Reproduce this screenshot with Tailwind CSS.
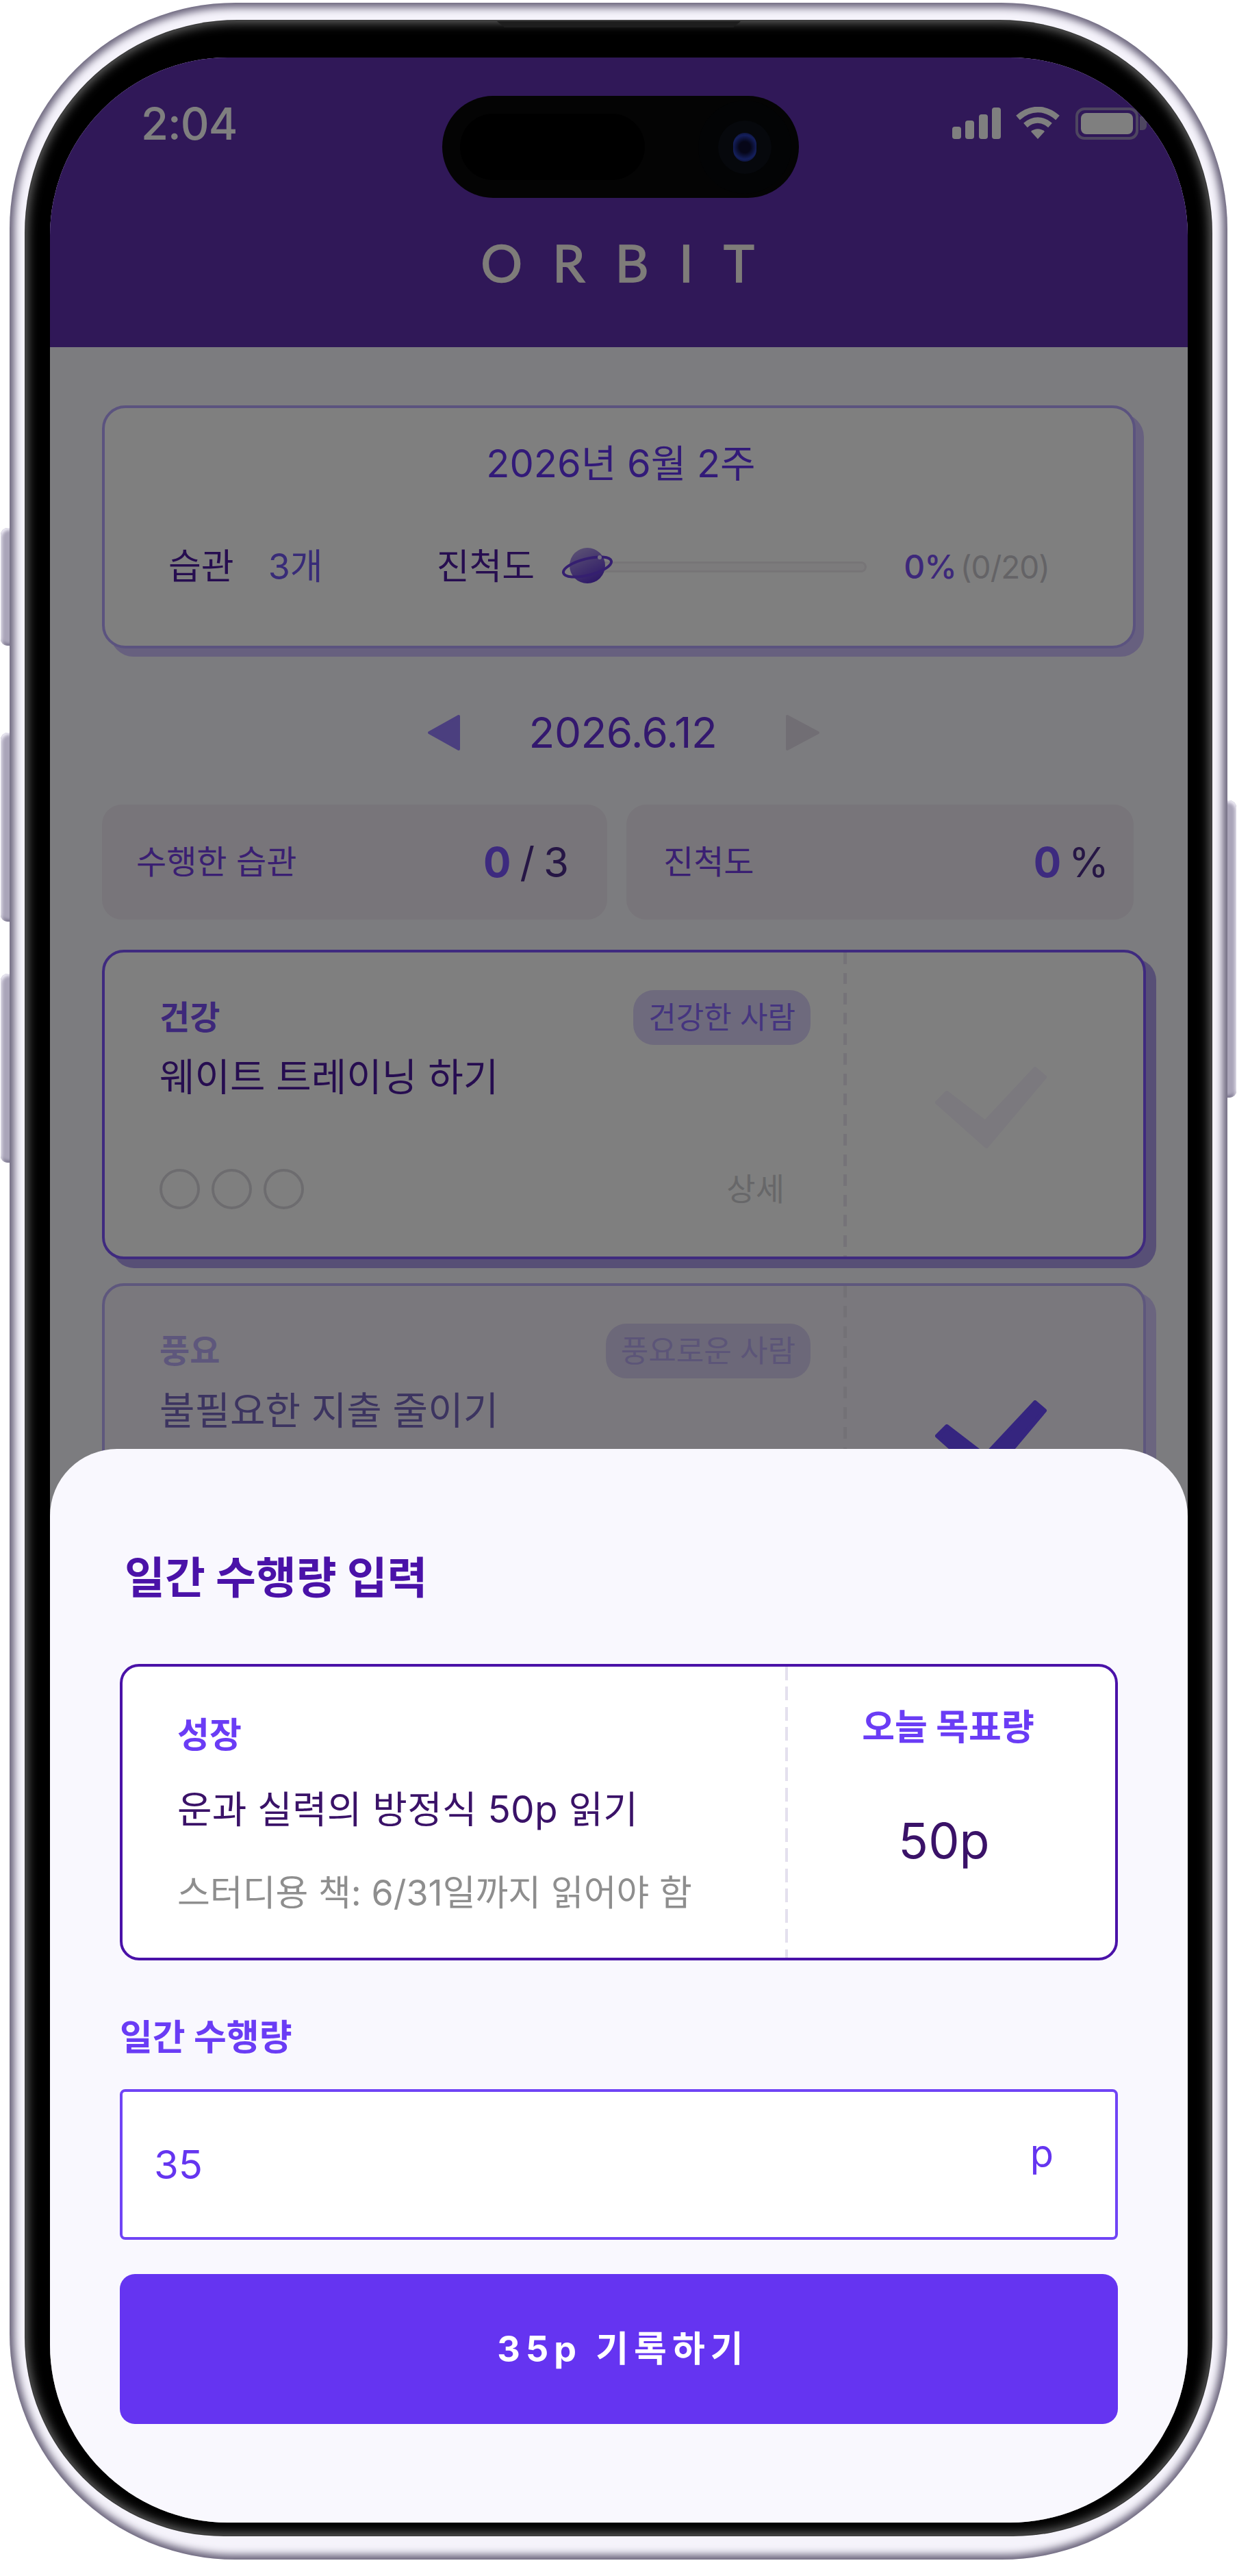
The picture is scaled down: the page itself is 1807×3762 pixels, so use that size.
<!DOCTYPE html>
<html lang="ko">
<head>
  <meta charset="UTF-8" />
  <meta name="viewport" content="width=device-width, initial-scale=1.0" />
  <title>Orbit</title>
  <script src="https://cdn.jsdelivr.net/npm/@tailwindcss/browser@4"></script>
</head>
<body class="bg-white font-['Inter','Noto_Sans_CJK_KR',sans-serif]">

  <div class="relative ml-[14px] pt-[4px] w-[1779px] h-[3762px]">
    <!-- side buttons -->
    <div class="absolute left-[-13px] top-[771px] w-[20px] h-[172px] rounded-l-[10px] bg-[#aaa5b9] shadow-[inset_2px_3px_4px_#efecf6,inset_0_-3px_4px_#77728a]"></div>
    <div class="absolute left-[-13px] top-[1070px] w-[20px] h-[276px] rounded-l-[10px] bg-[#aaa5b9] shadow-[inset_2px_3px_4px_#efecf6,inset_0_-3px_4px_#77728a]"></div>
    <div class="absolute left-[-13px] top-[1422px] w-[20px] h-[276px] rounded-l-[10px] bg-[#aaa5b9] shadow-[inset_2px_3px_4px_#efecf6,inset_0_-3px_4px_#77728a]"></div>
    <div class="absolute right-[-13px] top-[1169px] w-[20px] h-[434px] rounded-r-[10px] bg-[#aaa5b9] shadow-[inset_-2px_3px_4px_#efecf6,inset_0_-3px_4px_#77728a]"></div>

    <!-- metal band -->
    <div class="relative w-[1779px] h-[3734px] rounded-[330px] pt-[26px] px-[23px] pb-[35px] bg-[#f5f3fb] shadow-[inset_0_0_12px_7px_#676178]">
      <!-- bezel -->
      <div class="relative w-full h-full rounded-[310px_310px_290px_290px] bg-black pt-[54px] pl-[36px] pr-[35px] pb-[19px] shadow-[inset_0_0_16px_3px_#6b6b6b,0_0_0_1px_#3a3a3a]">
        <!-- speaker -->
        <div class="absolute left-[689px] top-[1px] w-[356px] h-[9px] bg-[#1e1e1e] [clip-path:polygon(0_0,100%_0,97%_100%,3%_100%)]"></div>

        <!-- screen -->
        <div class="relative w-[1662px] h-[3600px] rounded-[260px] overflow-hidden bg-[#f9f8fe]">

          <header class="h-[423px] bg-[#6030b0] text-[#fdf8f2]">
            <div class="flex justify-between items-start pt-[61px] pl-[133px] pr-[60px]">
              <span class="text-[65px] leading-[72px] font-medium tracking-[-1px] text-white">2:04</span>
              <div class="flex items-center mt-[11px]">
                <svg class="mr-[21px]" width="71" height="46" viewBox="0 0 71 46" fill="#fff">
                  <rect x="0" y="28" width="13" height="18" rx="4"/>
                  <rect x="19" y="19" width="13" height="27" rx="4"/>
                  <rect x="39" y="10" width="13" height="36" rx="4"/>
                  <rect x="58" y="0" width="13" height="46" rx="4"/>
                </svg>
                <svg class="mr-[22px]" width="66" height="48" viewBox="0 0 66 48" fill="none" stroke="#fff" stroke-width="8.5">
                  <path d="M4 16 C22 0 44 0 62 16"/>
                  <path d="M15 27 C26 17 40 17 51 27"/>
                  <path d="M33 47 L23 36 C29 31 37 31 43 36 Z" fill="#fff" stroke="none"/>
                </svg>
                <div class="w-[92px] h-[47px] rounded-[13px] border-[4px] border-[#9d8cc0] p-[4px]">
                  <div class="w-full h-full rounded-[8px] bg-white"></div>
                </div>
                <div class="w-[10px] h-[20px] ml-[2px] rounded-r-[6px] bg-[#9d8cc0]"></div>
              </div>
            </div>
            <div class="mt-[121px] text-center text-[76px] leading-[90px] font-['Lato',sans-serif] tracking-[44px] pl-[40px] [-webkit-text-stroke:1.5px_#fdf8f2]">ORBIT</div>
          </header>

          <main class="pt-[85px] pl-[76px]">
            <!-- weekly summary -->
            <section class="box-border w-[1510px] h-[355px] rounded-[34px] border-[4px] border-[#b6a6ff] bg-white shadow-[12px_12px_0_#cec0ff] pt-[51px]">
              <h2 class="text-center text-[56px] leading-[60px] pl-[6px] text-[#6534f1]">2026년 6월 2주</h2>
              <div class="flex items-center mt-[91px] pl-[93px] h-[60px] text-[52px]">
                <span class="text-[#4d1aa0]">습관</span>
                <span class="ml-[50px] text-[#7056f0]">3개</span>
                <span class="ml-[166px] text-[#4d1aa0]">진척도</span>
                <div class="relative ml-[85px] w-[400px] h-[16px] rounded-full border-[3px] border-[#eeeaee] bg-[#f8f6f8]">
                  <svg class="absolute left-[-49px] top-[-27px]" width="76" height="60" viewBox="0 0 76 60">
                    <defs>
                      <linearGradient id="planet" x1="0.2" y1="0" x2="0.7" y2="1">
                        <stop offset="0" stop-color="#b7a4e8"/>
                        <stop offset="1" stop-color="#5a2fd0"/>
                      </linearGradient>
                    </defs>
                    <circle cx="38" cy="30" r="26" fill="url(#planet)"/>
                    <ellipse cx="38" cy="32" rx="36" ry="12" fill="none" stroke="#6a3fe0" stroke-width="4" transform="rotate(-14 38 32)"/>
                    <circle cx="56" cy="18" r="3" fill="#e8e0ff"/>
                  </svg>
                </div>
                <span class="ml-[54px] text-[48px] font-medium tracking-[-1px] text-[#7a50f5]">0%</span>
                <span class="ml-[6px] text-[46px] tracking-[-1px] text-[#c9c7cc]">(0/20)</span>
              </div>
            </section>

            <!-- date nav -->
            <div class="flex items-center justify-center w-[1510px] h-[228px] pt-[18px] pl-[14px]">
              <svg width="49" height="54" viewBox="0 0 49 54" fill="#967eff" stroke="#967eff" stroke-width="4" stroke-linejoin="round"><path d="M3 27 L46 3 V51 Z"/></svg>
              <span class="mx-[100px] text-[62px] leading-[70px] tracking-[-0.5px] text-[#6630dc]">2026.6.12</span>
              <svg width="51" height="54" viewBox="0 0 51 54" fill="#e2dce8" stroke="#e2dce8" stroke-width="4" stroke-linejoin="round"><path d="M48 27 L3 3 V51 Z"/></svg>
            </div>

            <!-- daily stats -->
            <div class="flex gap-[28px] w-[1511px]">
              <div class="flex items-center justify-between w-[738px] h-[168px] rounded-[29px] bg-[#f0eaf4] pl-[50px] pr-[58px]">
                <span class="text-[48px] text-[#743ee4]">수행한 습관</span>
                <span class="text-[60px] tracking-[-2px] text-[#4c2c8a]"><b class="font-bold text-[#7a54ff]">0</b> / 3</span>
              </div>
              <div class="flex items-center justify-between w-[741px] h-[168px] rounded-[29px] bg-[#f0eaf4] pl-[54px] pr-[39px]">
                <span class="text-[48px] text-[#743ee4]">진척도</span>
                <span class="text-[60px] tracking-[-3px] text-[#4c2c8a]"><b class="font-bold text-[#7a54ff]">0</b> %</span>
              </div>
            </div>

            <!-- habit cards -->
            <article class="flex box-border mt-[44px] w-[1525px] h-[452px] rounded-[32px] border-[4px] border-[#7e54ff] bg-white shadow-[15px_13px_0_#ae9eec]">
              <div class="flex flex-col w-[1079px] pl-[80px] pt-[55px] pr-[48px] pb-[64px]">
                <div class="flex items-center justify-between h-[80px]">
                  <span class="text-[48px] font-bold text-[#7a50f5]">건강</span>
                  <span class="flex items-center h-[80px] rounded-[30px] bg-[#dcd5fa] px-[22px] text-[44px] text-[#8a6aff]">건강한 사람</span>
                </div>
                <p class="mt-[14px] text-[56px] leading-[66px] text-[#4d1aa0]">웨이트 트레이닝 하기</p>
                <div class="flex items-center justify-between mt-auto pr-[38px]">
                  <div class="flex gap-[17px]">
                    <span class="w-[59px] h-[59px] rounded-full border-[4px] border-[#dad9de]"></span>
                    <span class="w-[59px] h-[59px] rounded-full border-[4px] border-[#dad9de]"></span>
                    <span class="w-[59px] h-[59px] rounded-full border-[4px] border-[#dad9de]"></span>
                  </div>
                  <span class="text-[46px] text-[#cfcfd2]">상세</span>
                </div>
              </div>
              <div class="w-[5px] bg-[repeating-linear-gradient(to_bottom,#eae6f0_0_17px,transparent_17px_29.5px)]"></div>
              <div class="flex-1 flex items-center justify-center pr-[12px] pt-[10px]">
                <svg width="164" height="120" viewBox="0 0 164 120" fill="#f6f2fc" stroke="#f6f2fc" stroke-width="6" stroke-linejoin="round"><polygon points="17,38 3,52 75,116 160,15 146,3 73,81"/></svg>
              </div>
            </article>

            <article class="flex box-border mt-[35px] w-[1525px] h-[452px] rounded-[32px] border-[4px] border-[#bcaefa] bg-[#f5f1fb] shadow-[15px_13px_0_#d6caff]">
              <div class="flex flex-col w-[1079px] pl-[80px] pt-[55px] pr-[48px] pb-[64px]">
                <div class="flex items-center justify-between h-[80px]">
                  <span class="text-[48px] font-bold text-[#bcaef8]">풍요</span>
                  <span class="flex items-center h-[80px] rounded-[30px] bg-[#d9d1f2] px-[22px] text-[44px] text-[#b8aaf0]">풍요로운 사람</span>
                </div>
                <p class="mt-[14px] text-[56px] leading-[66px] text-[#7868c0]">불필요한 지출 줄이기</p>
              </div>
              <div class="w-[5px] bg-[repeating-linear-gradient(to_bottom,#e6e2ec_0_17px,transparent_17px_29.5px)]"></div>
              <div class="flex-1 flex items-center justify-center pr-[12px] pt-[10px]">
                <svg width="164" height="120" viewBox="0 0 164 120" fill="#6a4aff" stroke="#6a4aff" stroke-width="6" stroke-linejoin="round"><polygon points="17,38 3,52 75,116 160,15 146,3 73,81"/></svg>
              </div>
            </article>
          </main>

          <!-- dim layer -->
          <div class="absolute inset-0 bg-black/50"></div>

          <!-- dynamic island -->
          <div class="absolute left-[573px] top-[56px] w-[521px] h-[149px] rounded-full bg-[#040404]">
            <div class="absolute left-[26px] top-[26px] w-[270px] h-[97px] rounded-full bg-black"></div>
            <div class="absolute left-[374px] top-[7px] w-[136px] h-[136px] rounded-full bg-[#030405] flex items-center justify-center">
              <div class="w-[78px] h-[78px] rounded-full bg-[#06080c] flex items-center justify-center">
                <div class="w-[34px] h-[42px] rounded-full bg-[radial-gradient(circle,#060618_30%,#141f5c_65%,#05060f_100%)]"></div>
              </div>
            </div>
          </div>

          <!-- input sheet -->
          <section class="absolute inset-x-0 bottom-0 h-[1568px] rounded-t-[98px] bg-[#f9f8fe] px-[102px] pt-[150px]">
            <h3 class="ml-[7px] text-[64px] leading-[76px] font-bold text-[#4a12a8]">일간 수행량 입력</h3>

            <div class="flex box-border mt-[88px] h-[433px] rounded-[28px] border-[4px] border-[#4a12a8] bg-white">
              <div class="w-[968px] pl-[80px] pt-[65px]">
                <p class="text-[51px] leading-[70px] font-bold text-[#6a3cf5]">성장</p>
                <p class="mt-[38px] text-[55px] leading-[70px] tracking-[0.2px] text-[#3a1268]">운과 실력의 방정식 50p 읽기</p>
                <p class="mt-[53px] text-[52px] leading-[70px] text-[#8e8e8e]">스터디용 책: 6/31일까지 읽어야 함</p>
              </div>
              <div class="w-[4px] bg-[repeating-linear-gradient(to_bottom,#e4e0ee_0_20px,transparent_20px_29.5px)]"></div>
              <div class="flex-1 flex flex-col items-center pt-[54px] pr-[10px]">
                <p class="text-[52px] leading-[70px] font-bold text-[#6a3cf5]">오늘 목표량</p>
                <p class="mt-[90px] mr-[12px] text-[72px] leading-[80px] text-[#3a1268]">50p</p>
              </div>
            </div>

            <label class="block mt-[78px] text-[52px] leading-[70px] font-bold text-[#6a3cf5]">일간 수행량</label>

            <div class="flex items-center justify-between box-border mt-[40px] h-[220px] rounded-[8px] border-[4px] border-[#7044f5] bg-white pl-[46px] pr-[90px]">
              <span class="text-[58px] text-[#6535f0]">35</span>
              <span class="pb-[32px] text-[56px] text-[#6535f0]">p</span>
            </div>

            <button class="block w-full mt-[50px] h-[219px] pl-[12px] rounded-[22px] bg-[#6534f1] text-[52px] font-bold tracking-[8px] text-white">35p 기록하기</button>
          </section>
        </div>
      </div>
    </div>
  </div>

</body>
</html>
